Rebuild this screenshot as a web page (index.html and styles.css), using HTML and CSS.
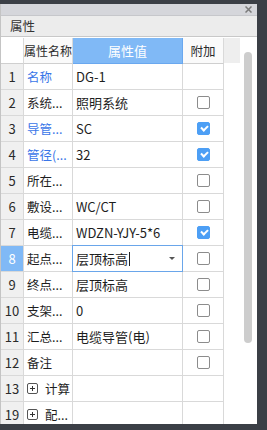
FILE: index.html
```html
<!DOCTYPE html>
<html lang="zh-CN">
<head>
    <meta charset="UTF-8">
    <title>属性</title>
    <link rel="stylesheet" href="styles.css">
</head>
<body>
    <div class="panel">
        <div class="titlebar">
            <span class="close">
                <svg width="7" height="7" viewBox="0 0 7 7"><path d="M0.5 0.5 L6.5 6.5 M6.5 0.5 L0.5 6.5" stroke="#7a7a7a" stroke-width="1.5"/></svg>
            </span>
        </div>
        <div class="caption">属性</div>

        <div class="body">
            <div class="grid">
                <div class="row head">
                    <div class="cell num"></div>
                    <div class="cell name">属性名称</div>
                    <div class="cell value active">属性值</div>
                    <div class="cell extra">附加</div>
                </div>

                <div class="row">
                    <div class="cell num">1</div>
                    <div class="cell name blue">名称</div>
                    <div class="cell value">DG-1</div>
                    <div class="cell extra"></div>
                </div>
                <div class="row">
                    <div class="cell num">2</div>
                    <div class="cell name">系统...</div>
                    <div class="cell value">照明系统</div>
                    <div class="cell extra"><span class="check"></span></div>
                </div>
                <div class="row">
                    <div class="cell num">3</div>
                    <div class="cell name blue">导管...</div>
                    <div class="cell value">SC</div>
                    <div class="cell extra"><span class="check on"></span></div>
                </div>
                <div class="row">
                    <div class="cell num">4</div>
                    <div class="cell name blue">管径(...</div>
                    <div class="cell value">32</div>
                    <div class="cell extra"><span class="check on"></span></div>
                </div>
                <div class="row">
                    <div class="cell num">5</div>
                    <div class="cell name">所在...</div>
                    <div class="cell value"></div>
                    <div class="cell extra"><span class="check"></span></div>
                </div>
                <div class="row">
                    <div class="cell num">6</div>
                    <div class="cell name">敷设...</div>
                    <div class="cell value">WC/CT</div>
                    <div class="cell extra"><span class="check"></span></div>
                </div>
                <div class="row">
                    <div class="cell num">7</div>
                    <div class="cell name">电缆...</div>
                    <div class="cell value">WDZN-YJY-5*6</div>
                    <div class="cell extra"><span class="check on"></span></div>
                </div>
                <div class="row current">
                    <div class="cell num">8</div>
                    <div class="cell name">起点...</div>
                    <div class="cell value editor">
                        <span class="edit-text">层顶标高</span><span class="caret"></span>
                        <span class="arrow"></span>
                    </div>
                    <div class="cell extra"><span class="check"></span></div>
                </div>
                <div class="row">
                    <div class="cell num">9</div>
                    <div class="cell name">终点...</div>
                    <div class="cell value">层顶标高</div>
                    <div class="cell extra"><span class="check"></span></div>
                </div>
                <div class="row">
                    <div class="cell num">10</div>
                    <div class="cell name">支架...</div>
                    <div class="cell value">0</div>
                    <div class="cell extra"><span class="check"></span></div>
                </div>
                <div class="row">
                    <div class="cell num">11</div>
                    <div class="cell name">汇总...</div>
                    <div class="cell value">电缆导管(电)</div>
                    <div class="cell extra"><span class="check"></span></div>
                </div>
                <div class="row">
                    <div class="cell num">12</div>
                    <div class="cell name">备注</div>
                    <div class="cell value"></div>
                    <div class="cell extra"><span class="check"></span></div>
                </div>
                <div class="row">
                    <div class="cell num">13</div>
                    <div class="cell name"><span class="expand"></span>计算</div>
                    <div class="cell value"></div>
                    <div class="cell extra"></div>
                </div>
                <div class="row">
                    <div class="cell num">19</div>
                    <div class="cell name"><span class="expand"></span>配...</div>
                    <div class="cell value"></div>
                    <div class="cell extra"></div>
                </div>
            </div>

            <div class="filler">
                <div class="filler-head"></div>
            </div>

            <div class="scroll">
                <div class="thumb"></div>
            </div>
        </div>
    </div>
</body>
</html>
```

FILE: styles.css
```css
* {
    margin: 0;
    padding: 0;
    box-sizing: border-box;
}

body {
    width: 267px;
    height: 430px;
    overflow: hidden;
    background-color: #3b3f46;
    font-family: "Noto Sans CJK SC", "Noto Sans", sans-serif;
    font-size: 13px;
    color: #1e1e1e;
}

.panel {
    width: 257px;
    height: 420px;
    margin-top: 4px;
    background-color: #ffffff;
    border-left: 1px solid #c4c4c4;
    overflow: hidden;
}

.titlebar {
    height: 12px;
    background-color: #d5d6db;
    border-bottom: 1px solid #c6c7cb;
    display: flex;
    justify-content: flex-end;
    align-items: center;
    padding-right: 5px;
}

.close {
    display: flex;
}

.caption {
    height: 21px;
    background-color: #ececec;
    border-bottom: 1px solid #c8c8c8;
    padding-left: 9px;
    line-height: 20px;
    font-size: 12.5px;
    color: #333333;
    margin-bottom: 1px;
}

.body {
    display: flex;
}

.grid {
    width: 223px;
}

.row {
    display: grid;
    grid-template-columns: 23px 49px 110px 41px;
    height: 26px;
}

.cell {
    border-right: 1px solid #d9d9d9;
    border-bottom: 1px solid #d9d9d9;
    display: flex;
    align-items: center;
    white-space: nowrap;
    overflow: hidden;
    font-size: 12.5px;
}

.num {
    justify-content: center;
    background-color: #f0f0f0;
    font-size: 13px;
    color: #2a2a2a;
}

.name {
    padding-left: 3px;
}

.name.blue {
    color: #3a76e8;
}

.value {
    padding-left: 3px;
    font-size: 13px;
}

.extra {
    justify-content: center;
}

/* шапка таблицы */
.head .cell {
    background-color: #fafafa;
    border-bottom-color: #cfcfcf;
    justify-content: center;
    color: #2a2a2a;
}

.head .num {
    background-color: #ffffff;
}

.head .name {
    padding-left: 0;
    font-size: 12px;
}

.head .value.active {
    background-color: #80b9f6;
    border-color: #6aa8ef;
    color: #ffffff;
    padding-left: 0;
}

.current .num {
    background-color: #80b9f6;
    color: #ffffff;
}

.editor {
    border: 1px solid #6aa6ea;
    margin-left: -1px;
    margin-top: -1px;
    height: 27px;
    padding-left: 3px;
    position: relative;
}

.caret {
    display: inline-block;
    width: 1px;
    height: 14px;
    background-color: #222222;
    margin-left: 1px;
}

.arrow {
    position: absolute;
    right: 7px;
    top: 11px;
    border-left: 3px solid transparent;
    border-right: 3px solid transparent;
    border-top: 3px solid #555555;
}

.check {
    width: 13px;
    height: 13px;
    border: 1px solid #8c8c8c;
    border-radius: 2px;
    background-color: #ffffff;
}

.check.on {
    background-color: #4d9ff5;
    border-color: #4d9ff5;
    position: relative;
}

.check.on::after {
    content: '';
    position: absolute;
    left: 3px;
    top: 2px;
    width: 5px;
    height: 3px;
    border-left: 2px solid #ffffff;
    border-bottom: 2px solid #ffffff;
    transform: rotate(-45deg);
}

.expand {
    width: 11px;
    height: 11px;
    border: 1px solid #555555;
    border-radius: 2px;
    margin-right: 7px;
    position: relative;
    flex-shrink: 0;
}

.expand::before,
.expand::after {
    content: '';
    position: absolute;
    background-color: #333333;
}

.expand::before {
    left: 2px;
    top: 4px;
    width: 5px;
    height: 1px;
}

.expand::after {
    left: 4px;
    top: 2px;
    width: 1px;
    height: 5px;
}

.filler {
    width: 16px;
}

.filler-head {
    height: 25px;
    background-color: #eeeeee;
}

.scroll {
    width: 17px;
    padding-top: 14px;
    padding-left: 4px;
}

.thumb {
    width: 8px;
    height: 291px;
    border-radius: 4px;
    background-color: #cdcdcd;
}
```
